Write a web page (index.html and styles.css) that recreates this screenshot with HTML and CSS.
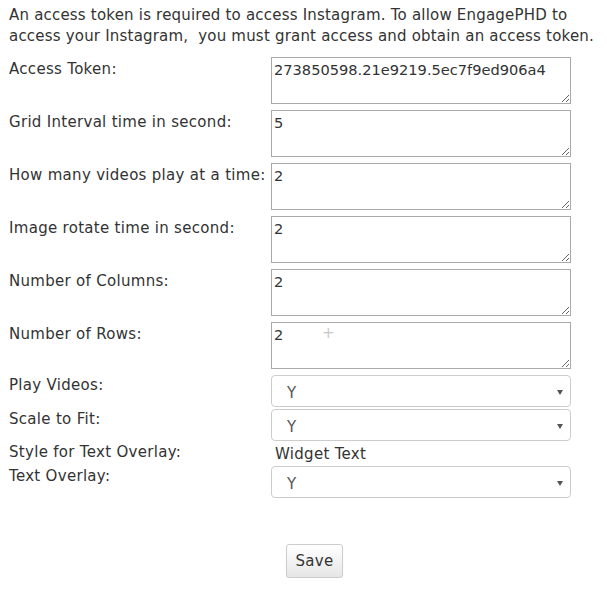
FILE: index.html
```html
<!DOCTYPE html>
<html>
<head>
<meta charset="utf-8">
<link rel="stylesheet" href="styles.css">
</head>
<body>
<p class="intro">An access token is required to access Instagram. To allow EngagePHD to<br>access your Instagram,&nbsp; you must grant access and obtain an access token.</p>
<form class="form">
  <div class="row row-text">
    <label class="label">Access Token:</label>
    <textarea class="field">273850598.21e9219.5ec7f9ed906a4</textarea>
  </div>
  <div class="row row-text">
    <label class="label">Grid Interval time in second:</label>
    <textarea class="field">5</textarea>
  </div>
  <div class="row row-text">
    <label class="label">How many videos play at a time:</label>
    <textarea class="field">2</textarea>
  </div>
  <div class="row row-text">
    <label class="label">Image rotate time in second:</label>
    <textarea class="field">2</textarea>
  </div>
  <div class="row row-text">
    <label class="label">Number of Columns:</label>
    <textarea class="field">2</textarea>
  </div>
  <div class="row row-text">
    <label class="label">Number of Rows:</label>
    <div class="field-wrap">
      <textarea class="field">2</textarea>
      <span class="cursor">+</span>
    </div>
  </div>
  <div class="row row-select first-select">
    <label class="label">Play Videos:</label>
    <div class="select-wrap"><select class="select"><option>Y</option><option>N</option></select></div>
  </div>
  <div class="row row-select">
    <label class="label">Scale to Fit:</label>
    <div class="select-wrap"><select class="select"><option>Y</option><option>N</option></select></div>
  </div>
  <div class="row row-plain">
    <span class="label">Style for Text Overlay:</span>
    <span class="plain">Widget Text</span>
  </div>
  <div class="row row-select">
    <label class="label">Text Overlay:</label>
    <div class="select-wrap"><select class="select"><option>Y</option><option>N</option></select></div>
  </div>
  <div class="actions">
    <button type="button" class="btn">Save</button>
  </div>
</form>
</body>
</html>
```

FILE: styles.css
```css
html, body {
  background: #ffffff;
}
body {
  margin: 5px 8px;
  font-family: "DejaVu Sans", Verdana, sans-serif;
  font-size: 15px;
  letter-spacing: 0.3px;
  color: #333333;
}
.intro {
  margin: 0 0 10px 1px;
  line-height: 21px;
  white-space: nowrap;
  letter-spacing: 0.2px;
}
.form {
  display: flex;
  flex-direction: column;
}
.row {
  display: flex;
  align-items: flex-start;
}
.row-text {
  margin-bottom: 6px;
}
.label {
  width: 262px;
  flex: none;
  padding-left: 1px;
  line-height: 18px;
  color: #333333;
}
.row-text .label {
  padding-top: 3px;
}
.row-select .label {
  padding-top: 1px;
}
.field-wrap {
  position: relative;
}
.field {
  display: block;
  box-sizing: border-box;
  width: 300px;
  height: 47px;
  margin: 0;
  padding: 3px 2px;
  border: 1px solid #a9a9a9;
  border-radius: 0;
  font-family: "DejaVu Sans", Verdana, sans-serif;
  font-size: 14.6px;
  letter-spacing: 0;
  line-height: 18px;
  color: #333333;
  background: #ffffff;
  resize: both;
  overflow: hidden;
}
.cursor {
  position: absolute;
  left: 51px;
  top: 2px;
  font-family: "DejaVu Sans", sans-serif;
  font-size: 15px;
  color: #c8c8c8;
}
.first-select {
  margin-top: 0;
}
.row-select {
  margin-bottom: 2px;
}
.select-wrap {
  position: relative;
  width: 300px;
}
.select-wrap::after {
  content: "";
  position: absolute;
  right: 8px;
  top: 15px;
  border-left: 3px solid transparent;
  border-right: 3px solid transparent;
  border-top: 5px solid #555555;
}
.select {
  display: block;
  box-sizing: border-box;
  width: 300px;
  height: 32px;
  margin: 0;
  padding: 4px 16px 0 15px;
  border: 1px solid #cccccc;
  border-radius: 4px;
  background: #ffffff;
  appearance: none;
  -webkit-appearance: none;
  font-family: "DejaVu Sans", Verdana, sans-serif;
  font-size: 15px;
  color: #555555;
}
.row-plain {
  line-height: 22px;
  margin-bottom: 1px;
}
.row-plain .plain {
  padding-left: 4px;
}
.actions {
  margin-top: 44px;
  padding-left: 278px;
}
.btn {
  box-sizing: border-box;
  width: 57px;
  height: 34px;
  padding: 0;
  border: 1px solid #cccccc;
  border-radius: 3px;
  background: linear-gradient(#ffffff, #e6e6e6);
  font-family: "DejaVu Sans", Verdana, sans-serif;
  font-size: 15px;
  letter-spacing: 0.3px;
  color: #333333;
  box-shadow: 0 1px 1px rgba(0,0,0,0.08);
}
```
